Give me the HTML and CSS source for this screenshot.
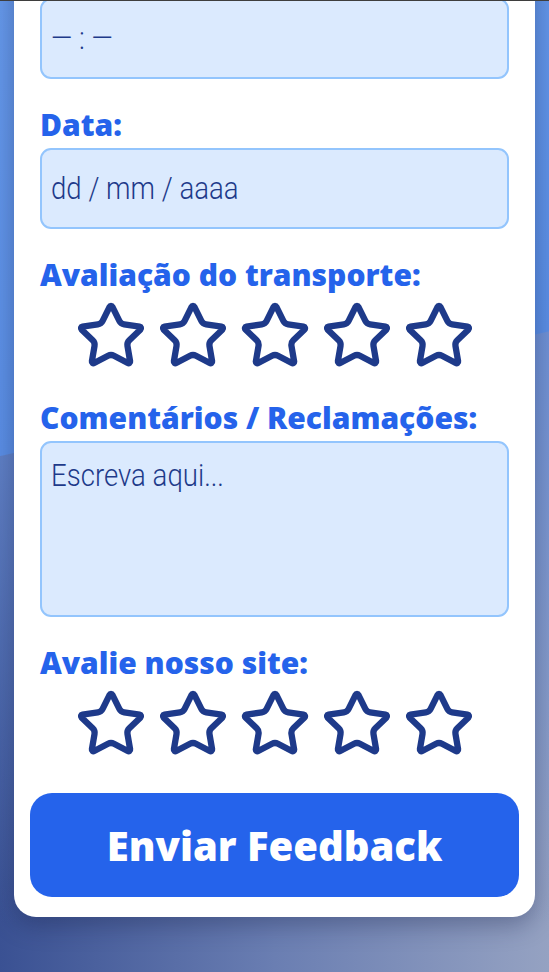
FILE: index.html
```html
<!DOCTYPE html>
<html lang="pt-BR">
<head>
<meta charset="utf-8">
<title>Feedback</title>
<link rel="stylesheet" href="styles.css">
</head>
<body>
<div class="topline"></div>
<main class="card">
  <form class="form">
    <div class="field">
      <label class="label">Horário:</label>
      <div class="input"><span class="ph">— : —</span></div>
    </div>
    <div class="field">
      <label class="label">Data:</label>
      <div class="input"><span class="ph">dd / mm / aaaa</span></div>
    </div>
    <div class="field">
      <label class="label">Avaliação do transporte:</label>
      <div class="stars">
        <svg class="star" viewBox="0 0 24 24"><path d="M11.525 2.295a.53.53 0 0 1 .95 0l2.31 4.679a2.123 2.123 0 0 0 1.595 1.16l5.166.756a.53.53 0 0 1 .294.904l-3.736 3.638a2.123 2.123 0 0 0-.611 1.878l.882 5.14a.53.53 0 0 1-.771.56l-4.618-2.428a2.122 2.122 0 0 0-1.973 0L6.396 21.01a.53.53 0 0 1-.77-.56l.881-5.139a2.122 2.122 0 0 0-.611-1.879L2.16 9.795a.53.53 0 0 1 .294-.906l5.165-.755a2.122 2.122 0 0 0 1.597-1.16z"/></svg>
        <svg class="star" viewBox="0 0 24 24"><path d="M11.525 2.295a.53.53 0 0 1 .95 0l2.31 4.679a2.123 2.123 0 0 0 1.595 1.16l5.166.756a.53.53 0 0 1 .294.904l-3.736 3.638a2.123 2.123 0 0 0-.611 1.878l.882 5.14a.53.53 0 0 1-.771.56l-4.618-2.428a2.122 2.122 0 0 0-1.973 0L6.396 21.01a.53.53 0 0 1-.77-.56l.881-5.139a2.122 2.122 0 0 0-.611-1.879L2.16 9.795a.53.53 0 0 1 .294-.906l5.165-.755a2.122 2.122 0 0 0 1.597-1.16z"/></svg>
        <svg class="star" viewBox="0 0 24 24"><path d="M11.525 2.295a.53.53 0 0 1 .95 0l2.31 4.679a2.123 2.123 0 0 0 1.595 1.16l5.166.756a.53.53 0 0 1 .294.904l-3.736 3.638a2.123 2.123 0 0 0-.611 1.878l.882 5.14a.53.53 0 0 1-.771.56l-4.618-2.428a2.122 2.122 0 0 0-1.973 0L6.396 21.01a.53.53 0 0 1-.77-.56l.881-5.139a2.122 2.122 0 0 0-.611-1.879L2.16 9.795a.53.53 0 0 1 .294-.906l5.165-.755a2.122 2.122 0 0 0 1.597-1.16z"/></svg>
        <svg class="star" viewBox="0 0 24 24"><path d="M11.525 2.295a.53.53 0 0 1 .95 0l2.31 4.679a2.123 2.123 0 0 0 1.595 1.16l5.166.756a.53.53 0 0 1 .294.904l-3.736 3.638a2.123 2.123 0 0 0-.611 1.878l.882 5.14a.53.53 0 0 1-.771.56l-4.618-2.428a2.122 2.122 0 0 0-1.973 0L6.396 21.01a.53.53 0 0 1-.77-.56l.881-5.139a2.122 2.122 0 0 0-.611-1.879L2.16 9.795a.53.53 0 0 1 .294-.906l5.165-.755a2.122 2.122 0 0 0 1.597-1.16z"/></svg>
        <svg class="star" viewBox="0 0 24 24"><path d="M11.525 2.295a.53.53 0 0 1 .95 0l2.31 4.679a2.123 2.123 0 0 0 1.595 1.16l5.166.756a.53.53 0 0 1 .294.904l-3.736 3.638a2.123 2.123 0 0 0-.611 1.878l.882 5.14a.53.53 0 0 1-.771.56l-4.618-2.428a2.122 2.122 0 0 0-1.973 0L6.396 21.01a.53.53 0 0 1-.77-.56l.881-5.139a2.122 2.122 0 0 0-.611-1.879L2.16 9.795a.53.53 0 0 1 .294-.906l5.165-.755a2.122 2.122 0 0 0 1.597-1.16z"/></svg>
      </div>
    </div>
    <div class="field">
      <label class="label">Comentários / Reclamações:</label>
      <div class="input textarea"><span class="ph">Escreva aqui...</span></div>
    </div>
    <div class="field">
      <label class="label">Avalie nosso site:</label>
      <div class="stars">
        <svg class="star" viewBox="0 0 24 24"><path d="M11.525 2.295a.53.53 0 0 1 .95 0l2.31 4.679a2.123 2.123 0 0 0 1.595 1.16l5.166.756a.53.53 0 0 1 .294.904l-3.736 3.638a2.123 2.123 0 0 0-.611 1.878l.882 5.14a.53.53 0 0 1-.771.56l-4.618-2.428a2.122 2.122 0 0 0-1.973 0L6.396 21.01a.53.53 0 0 1-.77-.56l.881-5.139a2.122 2.122 0 0 0-.611-1.879L2.16 9.795a.53.53 0 0 1 .294-.906l5.165-.755a2.122 2.122 0 0 0 1.597-1.16z"/></svg>
        <svg class="star" viewBox="0 0 24 24"><path d="M11.525 2.295a.53.53 0 0 1 .95 0l2.31 4.679a2.123 2.123 0 0 0 1.595 1.16l5.166.756a.53.53 0 0 1 .294.904l-3.736 3.638a2.123 2.123 0 0 0-.611 1.878l.882 5.14a.53.53 0 0 1-.771.56l-4.618-2.428a2.122 2.122 0 0 0-1.973 0L6.396 21.01a.53.53 0 0 1-.77-.56l.881-5.139a2.122 2.122 0 0 0-.611-1.879L2.16 9.795a.53.53 0 0 1 .294-.906l5.165-.755a2.122 2.122 0 0 0 1.597-1.16z"/></svg>
        <svg class="star" viewBox="0 0 24 24"><path d="M11.525 2.295a.53.53 0 0 1 .95 0l2.31 4.679a2.123 2.123 0 0 0 1.595 1.16l5.166.756a.53.53 0 0 1 .294.904l-3.736 3.638a2.123 2.123 0 0 0-.611 1.878l.882 5.14a.53.53 0 0 1-.771.56l-4.618-2.428a2.122 2.122 0 0 0-1.973 0L6.396 21.01a.53.53 0 0 1-.77-.56l.881-5.139a2.122 2.122 0 0 0-.611-1.879L2.16 9.795a.53.53 0 0 1 .294-.906l5.165-.755a2.122 2.122 0 0 0 1.597-1.16z"/></svg>
        <svg class="star" viewBox="0 0 24 24"><path d="M11.525 2.295a.53.53 0 0 1 .95 0l2.31 4.679a2.123 2.123 0 0 0 1.595 1.16l5.166.756a.53.53 0 0 1 .294.904l-3.736 3.638a2.123 2.123 0 0 0-.611 1.878l.882 5.14a.53.53 0 0 1-.771.56l-4.618-2.428a2.122 2.122 0 0 0-1.973 0L6.396 21.01a.53.53 0 0 1-.77-.56l.881-5.139a2.122 2.122 0 0 0-.611-1.879L2.16 9.795a.53.53 0 0 1 .294-.906l5.165-.755a2.122 2.122 0 0 0 1.597-1.16z"/></svg>
        <svg class="star" viewBox="0 0 24 24"><path d="M11.525 2.295a.53.53 0 0 1 .95 0l2.31 4.679a2.123 2.123 0 0 0 1.595 1.16l5.166.756a.53.53 0 0 1 .294.904l-3.736 3.638a2.123 2.123 0 0 0-.611 1.878l.882 5.14a.53.53 0 0 1-.771.56l-4.618-2.428a2.122 2.122 0 0 0-1.973 0L6.396 21.01a.53.53 0 0 1-.77-.56l.881-5.139a2.122 2.122 0 0 0-.611-1.879L2.16 9.795a.53.53 0 0 1 .294-.906l5.165-.755a2.122 2.122 0 0 0 1.597-1.16z"/></svg>
      </div>
    </div>
    <button type="button" class="submit">Enviar Feedback</button>
  </form>
</main>
</body>
</html>
```
FILE: styles.css
```css
* { box-sizing: border-box; }
html, body { margin: 0; padding: 0; }
body {
  min-height: 972px;
  overflow: hidden;
  padding: 0 14px 56px;
  font-family: "Open Sans", "Liberation Sans", sans-serif;
  background:
    linear-gradient(167.2deg, #6699ea 0%, #5a8ee4 41.5%, rgba(0,0,0,0) 41.6%),
    linear-gradient(to bottom, rgba(108,144,214,1) 30%, rgba(108,144,214,0) 95%),
    linear-gradient(to right, #3a5193 0%, #6a7eb2 50%, #95a2c2 100%);
}
.topline {
  position: fixed;
  top: 0; left: 0; right: 0;
  height: 1px;
  background: #3e3e3e;
  z-index: 5;
}
.card {
  margin-top: -68px;
  background: #fff;
  border-radius: 22px;
  box-shadow: 0 8px 24px rgba(20, 30, 70, 0.35);
  padding: 26px 16px 20px;
}
.form {
  display: flex;
  flex-direction: column;
  gap: 29px;
}
.field {
  display: flex;
  flex-direction: column;
  gap: 6px;
  padding: 0 10px;
}
.label {
  color: #2563eb;
  font-weight: 800;
  font-size: 30px;
  line-height: 34px;
}
.input {
  height: 81px;
  border: 2px solid #93c5fd;
  border-radius: 11px;
  background: #dbeafe;
  padding: 0 9px;
  display: flex;
  align-items: center;
}
.ph {
  display: inline-block;
  font-family: Roboto, "Liberation Sans", sans-serif;
  font-weight: 300;
  font-size: 31px;
  color: #1e3a8a;
  white-space: nowrap;
  transform: scaleX(0.89);
  transform-origin: left center;
}
.textarea {
  height: 176px;
  align-items: flex-start;
  padding-top: 14px;
}
.stars {
  display: flex;
  justify-content: center;
  gap: 10px;
  margin-top: 2px;
}
.star {
  width: 72px;
  height: 72px;
  fill: none;
  stroke: #1e3a8a;
  stroke-width: 2.1;
  stroke-linejoin: round;
  stroke-linecap: round;
}
.submit {
  margin-top: 4px;
  height: 104px;
  border: none;
  border-radius: 22px;
  background: #2563eb;
  color: #fff;
  font-family: "Open Sans", "Liberation Sans", sans-serif;
  font-weight: 800;
  font-size: 40px;
  cursor: pointer;
}
```
